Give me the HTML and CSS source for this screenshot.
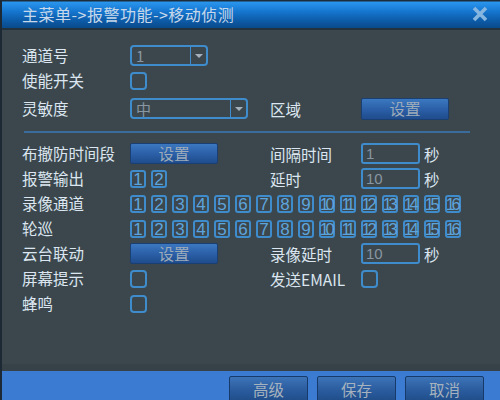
FILE: index.html
```html
<!DOCTYPE html>
<html lang="zh">
<head>
<meta charset="utf-8">
<link rel="stylesheet" href="styles.css">
</head>
<body>
<div class="window">
  <div class="titlebar">
    <span class="title">主菜单-&gt;报警功能-&gt;移动侦测</span>
    <svg class="close" width="16" height="16" viewBox="0 0 16 16"><path d="M2 2 L14 14 M14 2 L2 14" stroke="#86b6e0" stroke-width="3.6" fill="none"/></svg>
  </div>
  <div class="content">
    <div class="row r1">
      <span class="lbl">通道号</span>
      <div class="select s-short"><span class="val">1</span><span class="arrow"></span></div>
    </div>
    <div class="row">
      <span class="lbl">使能开关</span>
      <span class="check"></span>
    </div>
    <div class="row r3">
      <span class="lbl">灵敏度</span>
      <div class="left"><div class="select s-long"><span class="val">中</span><span class="arrow"></span></div></div>
      <span class="rlbl">区域</span>
      <span class="btn btn-wide">设置</span>
    </div>
    <div class="sep"></div>
    <div class="row">
      <span class="lbl">布撤防时间段</span>
      <div class="left"><span class="btn">设置</span></div>
      <span class="rlbl">间隔时间</span>
      <span class="input">1</span><span class="unit">秒</span>
    </div>
    <div class="row">
      <span class="lbl">报警输出</span>
      <div class="left nums"><span class="num">1</span><span class="num">2</span></div>
      <span class="rlbl">延时</span>
      <span class="input">10</span><span class="unit">秒</span>
    </div>
    <div class="row">
      <span class="lbl">录像通道</span>
      <div class="nums">
        <span class="num">1</span><span class="num">2</span><span class="num">3</span><span class="num">4</span><span class="num">5</span><span class="num">6</span><span class="num">7</span><span class="num">8</span><span class="num">9</span><span class="num dd">10</span><span class="num dd">11</span><span class="num dd">12</span><span class="num dd">13</span><span class="num dd">14</span><span class="num dd">15</span><span class="num dd">16</span>
      </div>
    </div>
    <div class="row">
      <span class="lbl">轮巡</span>
      <div class="nums">
        <span class="num">1</span><span class="num">2</span><span class="num">3</span><span class="num">4</span><span class="num">5</span><span class="num">6</span><span class="num">7</span><span class="num">8</span><span class="num">9</span><span class="num dd">10</span><span class="num dd">11</span><span class="num dd">12</span><span class="num dd">13</span><span class="num dd">14</span><span class="num dd">15</span><span class="num dd">16</span>
      </div>
    </div>
    <div class="row">
      <span class="lbl">云台联动</span>
      <div class="left"><span class="btn">设置</span></div>
      <span class="rlbl">录像延时</span>
      <span class="input">10</span><span class="unit">秒</span>
    </div>
    <div class="row">
      <span class="lbl">屏幕提示</span>
      <div class="left"><span class="check"></span></div>
      <span class="rlbl">发送EMAIL</span>
      <span class="check"></span>
    </div>
    <div class="row">
      <span class="lbl">蜂鸣</span>
      <span class="check"></span>
    </div>
  </div>
  <div class="band"></div>
  <div class="footer">
    <span class="fbtn">高级</span>
    <span class="fbtn">保存</span>
    <span class="fbtn">取消</span>
  </div>
</div>
</body>
</html>
```
FILE: styles.css
```css
html, body {
  margin: 0;
  padding: 0;
  background: #3c474d;
}
.window {
  width: 500px;
  height: 400px;
  display: flex;
  flex-direction: column;
  overflow: hidden;
  background: #3c474d;
  border-left: 2px solid #1d2a36;
  box-sizing: border-box;
  font-family: "Noto Sans CJK SC", "Liberation Sans", sans-serif;
}
.titlebar {
  height: 30px;
  flex: none;
  display: flex;
  align-items: center;
  justify-content: space-between;
  padding: 0 12px 0 20px;
  box-sizing: border-box;
  background: linear-gradient(#1c2c3a 0, #1c2c3a 1px, #2a96ee 2px, #1677d0 40%, #0c5aa6 75%, #0a4a8a 100%);
  border-bottom: 2px solid #24323e;
}
.title {
  color: #c6d8ea;
  font-size: 16px;
  letter-spacing: 0.5px;
  line-height: 30px;
}
.close {
  display: block;
  margin-top: -1px;
}
.content {
  flex: 1;
  padding: 13px 0 0 20px;
  color: #dbe6f0;
  font-size: 15.5px;
}
.row {
  display: flex;
  align-items: center;
  height: 25px;
}
.r3 {
  margin-top: 3px;
}
.lbl {
  width: 108px;
  flex: none;
  line-height: 25px;
}
.left {
  width: 140px;
  flex: none;
  display: flex;
  align-items: center;
}
.rlbl {
  width: 91px;
  flex: none;
}
.select {
  height: 21px;
  border: 2px solid #3e8ccc;
  border-radius: 4px;
  box-sizing: border-box;
  display: flex;
  align-items: center;
}
.s-short { width: 78px; }
.s-long { width: 118px; }
.val {
  flex: 1;
  color: #8896a2;
  font-size: 15px;
  padding-left: 4px;
  line-height: 17px;
}
.arrow {
  width: 15px;
  height: 17px;
  border-left: 1px solid #3e8ccc;
  position: relative;
}
.arrow::after {
  content: "";
  position: absolute;
  left: 4px;
  top: 7px;
  border-left: 4px solid transparent;
  border-right: 4px solid transparent;
  border-top: 4px solid #a4b0bc;
}
.check {
  width: 17px;
  height: 18px;
  border: 2px solid #3e8ccc;
  border-radius: 4px;
  box-sizing: border-box;
  flex: none;
}
.btn {
  width: 88px;
  height: 21px;
  box-sizing: border-box;
  background: linear-gradient(#3b78c0, #2a5ea6 55%, #1f4c8c);
  border: 1px solid #1a3f72;
  border-radius: 2px;
  color: #9eacba;
  font-size: 15.5px;
  text-align: center;
  line-height: 19px;
}
.btn-wide {
  height: 22px;
}
.input {
  width: 59px;
  height: 21px;
  box-sizing: border-box;
  border: 2px solid #3e8ccc;
  border-radius: 3px;
  color: #8896a2;
  font-family: "Liberation Sans", sans-serif;
  font-size: 15px;
  line-height: 17px;
  padding-left: 3px;
}
.unit {
  margin-left: 4px;
}
.sep {
  height: 2px;
  background: #3a6c9c;
  margin: 10px 30px 8px 2px;
}
.nums {
  display: flex;
  gap: 5px;
}
.num {
  width: 16px;
  height: 18px;
  box-sizing: border-box;
  border: 2px solid #3e8ccc;
  border-radius: 3px;
  color: #5ea4dc;
  font-family: "Liberation Sans", sans-serif;
  font-size: 17px;
  line-height: 15px;
  text-align: center;
  overflow: visible;
  white-space: nowrap;
  display: flex;
  justify-content: center;
}
.dd {
  letter-spacing: -3.5px;
  font-size: 16.5px;
  padding-right: 3px;
}
.band {
  height: 7px;
  flex: none;
  background: #364248;
}
.footer {
  height: 29px;
  flex: none;
  background: #3b7bd2;
  display: flex;
  justify-content: flex-end;
  align-items: flex-start;
  gap: 9px;
  padding: 5px 16px 0 0;
  box-sizing: border-box;
}
.fbtn {
  width: 79px;
  height: 28px;
  box-sizing: border-box;
  background: linear-gradient(#3d74b8, #2a5c9e 50%, #1f4b86);
  border: 1px solid #173a6a;
  border-radius: 2px;
  color: #a6b2be;
  font-size: 15.5px;
  text-align: center;
  line-height: 24px;
}
```
